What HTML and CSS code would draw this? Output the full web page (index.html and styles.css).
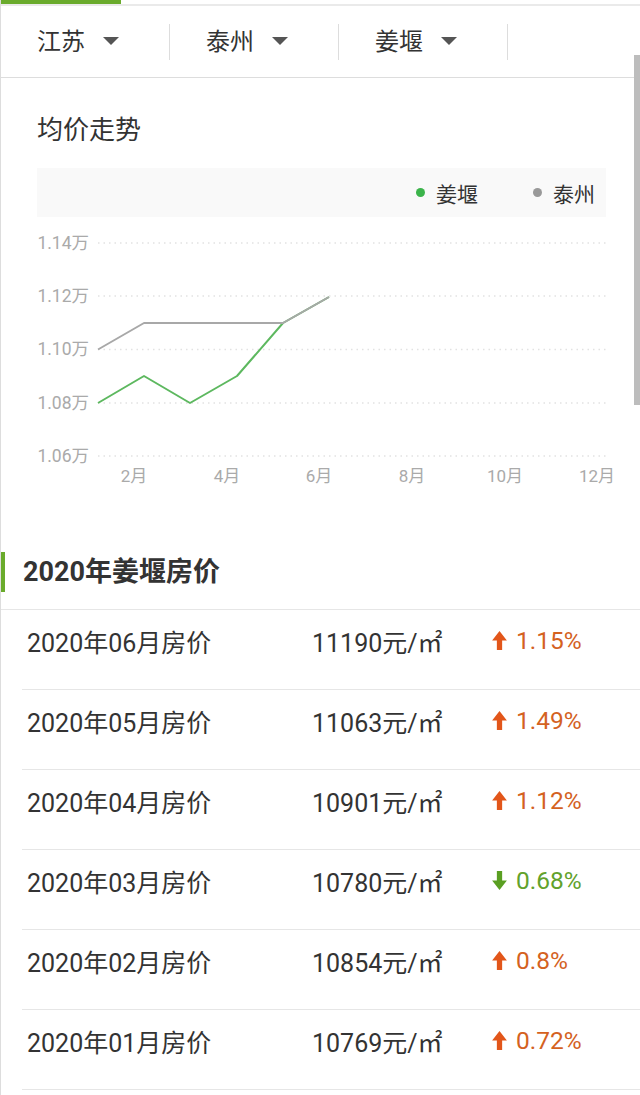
FILE: index.html
```html
<!DOCTYPE html>
<html lang="zh-CN">
<head>
    <meta charset="UTF-8">
    <meta name="viewport" content="width=device-width, initial-scale=1.0">
    <title>姜堰房价</title>
    <link rel="stylesheet" href="styles.css">
</head>
<body>
    <div class="page">
        <div class="top"><span></span></div>

        <div class="filters">
            <div class="filter">江苏 <i class="caret"></i></div>
            <div class="filter">泰州 <i class="caret"></i></div>
            <div class="filter">姜堰 <i class="caret"></i></div>
        </div>

        <div class="chart">
            <h2>均价走势</h2>
            <div class="legend">
                <span class="item"><b class="dot green"></b>姜堰</span>
                <span class="item"><b class="dot grey"></b>泰州</span>
            </div>
            <svg class="plot" width="640" height="270" viewBox="0 0 640 270">
                <g class="grid">
                    <line x1="97" y1="18" x2="605" y2="18"/>
                    <line x1="97" y1="71" x2="605" y2="71"/>
                    <line x1="97" y1="124.5" x2="605" y2="124.5"/>
                    <line x1="97" y1="178" x2="605" y2="178"/>
                    <line x1="97" y1="231" x2="605" y2="231"/>
                </g>
                <g class="ylabels">
                    <text x="88" y="24">1.14万</text>
                    <text x="88" y="77">1.12万</text>
                    <text x="88" y="130">1.10万</text>
                    <text x="88" y="184">1.08万</text>
                    <text x="88" y="237">1.06万</text>
                </g>
                <g class="xlabels">
                    <text x="133" y="257">2月</text>
                    <text x="226" y="257">4月</text>
                    <text x="318" y="257">6月</text>
                    <text x="411" y="257">8月</text>
                    <text x="504" y="257">10月</text>
                    <text x="596" y="257">12月</text>
                </g>
                <polyline class="line-green" points="97,178 143,151 189,178 236,151 282,98 328,72"/>
                <polyline class="line-grey" points="97,124.5 143,98 189,98 236,98 282,98 328,72"/>
            </svg>
        </div>

        <div class="prices">
            <div class="prices-head">
                <h3>2020年姜堰房价</h3>
            </div>
            <div class="row">
                <span>2020年06月房价</span>
                <span>11190元/㎡</span>
                <span class="up"><svg class="arrow" viewBox="0 0 14 18"><path d="M7 0 L14 9 L9.5 9 L9.5 18 L4.5 18 L4.5 9 L0 9 Z"/></svg>1.15%</span>
            </div>
            <div class="row">
                <span>2020年05月房价</span>
                <span>11063元/㎡</span>
                <span class="up"><svg class="arrow" viewBox="0 0 14 18"><path d="M7 0 L14 9 L9.5 9 L9.5 18 L4.5 18 L4.5 9 L0 9 Z"/></svg>1.49%</span>
            </div>
            <div class="row">
                <span>2020年04月房价</span>
                <span>10901元/㎡</span>
                <span class="up"><svg class="arrow" viewBox="0 0 14 18"><path d="M7 0 L14 9 L9.5 9 L9.5 18 L4.5 18 L4.5 9 L0 9 Z"/></svg>1.12%</span>
            </div>
            <div class="row">
                <span>2020年03月房价</span>
                <span>10780元/㎡</span>
                <span class="down"><svg class="arrow" viewBox="0 0 14 18"><path d="M7 18 L14 9 L9.5 9 L9.5 0 L4.5 0 L4.5 9 L0 9 Z"/></svg>0.68%</span>
            </div>
            <div class="row">
                <span>2020年02月房价</span>
                <span>10854元/㎡</span>
                <span class="up"><svg class="arrow" viewBox="0 0 14 18"><path d="M7 0 L14 9 L9.5 9 L9.5 18 L4.5 18 L4.5 9 L0 9 Z"/></svg>0.8%</span>
            </div>
            <div class="row">
                <span>2020年01月房价</span>
                <span>10769元/㎡</span>
                <span class="up"><svg class="arrow" viewBox="0 0 14 18"><path d="M7 0 L14 9 L9.5 9 L9.5 18 L4.5 18 L4.5 9 L0 9 Z"/></svg>0.72%</span>
            </div>
        </div>

        <div class="scrollbar"></div>
    </div>
</body>
</html>
```

FILE: styles.css
```css
body {
    margin: 0;
    background: #fff;
    font-family: Roboto, "Noto Sans CJK SC", sans-serif;
    color: #333;
}

.page {
    position: relative;
    width: 640px;
    min-height: 1095px;
    border-left: 1px solid #ddd;
    box-sizing: border-box;
    overflow: hidden;
}

/* top tab indicator */
.top {
    height: 4px;
    border-bottom: 2px solid #eaeaea;
}
.top span {
    display: block;
    width: 120px;
    height: 4px;
    background: #6aab2c;
}

.filters {
    display: flex;
    height: 71px;
    border-bottom: 1px solid #ddd;
}
.filter {
    position: relative;
    width: 169px;
    display: flex;
    align-items: center;
    padding: 0 0 4px 36px;
    box-sizing: border-box;
    font-size: 24px;
    color: #333;
}
.filter::after {
    content: "";
    position: absolute;
    right: 0;
    top: 18px;
    height: 36px;
    border-right: 1px solid #ddd;
}
.caret {
    display: inline-block;
    margin-left: 18px;
    margin-top: 2px;
    border-left: 8px solid transparent;
    border-right: 8px solid transparent;
    border-top: 8px solid #555;
}

.chart h2 {
    margin: 37px 0 0 36px;
    font-size: 26px;
    line-height: 30px;
    font-weight: normal;
    color: #333;
}
.legend {
    display: flex;
    justify-content: flex-end;
    align-items: center;
    gap: 55px;
    height: 49px;
    margin: 23px 34px 0 36px;
    padding-right: 11px;
    background: #f9f9f9;
    font-size: 21px;
    color: #333;
}
.legend .item {
    display: flex;
    align-items: center;
}
.dot {
    width: 9px;
    height: 9px;
    border-radius: 50%;
    margin-right: 11px;
}
.dot.green { background: #3cb44b; }
.dot.grey { background: #999; }

.plot {
    display: block;
    margin-top: 8px;
}
.grid line {
    stroke: #e2e2e2;
    stroke-width: 1.5;
    stroke-dasharray: 1.5 4;
}
.ylabels text {
    fill: #aaa;
    font-size: 17.5px;
    text-anchor: end;
}
.xlabels text {
    fill: #aaa;
    font-size: 17px;
    text-anchor: middle;
}
.line-green, .line-grey {
    fill: none;
    stroke-width: 2;
    stroke-linejoin: round;
}
.line-green { stroke: #5db85f; }
.line-grey { stroke: #a8a8a8; }

.prices-head {
    padding: 57px 0 17px;
    border-bottom: 1px solid #e6e6e6;
}
.prices h3 {
    margin: 0;
    height: 40px;
    line-height: 40px;
    padding-left: 18px;
    border-left: 4px solid #6aab2c;
    font-size: 27px;
    font-weight: bold;
    color: #333;
}
.row {
    display: grid;
    grid-template-columns: 285px 180px 1fr;
    align-items: center;
    height: 80px;
    box-sizing: border-box;
    margin-left: 21px;
    padding: 0 0 18px 5px;
    border-bottom: 1px solid #e6e6e6;
    font-size: 25px;
    color: #333;
}
.up, .down {
    display: flex;
    align-items: center;
    font-size: 24.5px;
}
.up { color: #d4621f; }
.down { color: #62a22c; }
.arrow {
    width: 15px;
    height: 19px;
    margin-right: 9px;
}
.up .arrow { fill: #e2561a; }
.down .arrow { fill: #5a9f22; }

.scrollbar {
    position: absolute;
    top: 55px;
    right: 0;
    width: 6px;
    height: 350px;
    background: #bdbdbd;
}
```
